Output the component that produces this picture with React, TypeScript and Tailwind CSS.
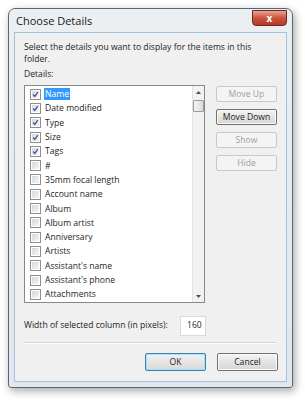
import React from "react";

const items: { label: string; checked: boolean; selected?: boolean }[] = [
  { label: "Name", checked: true, selected: true },
  { label: "Date modified", checked: true },
  { label: "Type", checked: true },
  { label: "Size", checked: true },
  { label: "Tags", checked: true },
  { label: "#", checked: false },
  { label: "35mm focal length", checked: false },
  { label: "Account name", checked: false },
  { label: "Album", checked: false },
  { label: "Album artist", checked: false },
  { label: "Anniversary", checked: false },
  { label: "Artists", checked: false },
  { label: "Assistant's name", checked: false },
  { label: "Assistant's phone", checked: false },
  { label: "Attachments", checked: false },
  { label: "", checked: false },
];

function CheckBox({ checked }: { checked: boolean }) {
  return (
    <div className="w-[11px] h-[11px] border border-[#8e8f8f] bg-white p-[1px] shrink-0">
      <div className="w-full h-full bg-gradient-to-br from-[#d6d8da] to-[#f6f6f6] flex items-center justify-center">
        {checked && (
          <svg width="9" height="9" viewBox="0 0 9 9">
            <path d="M1.5 4.5 L3.6 7 L7.5 1.5" fill="none" stroke="#3d5792" strokeWidth="1.6" />
          </svg>
        )}
      </div>
    </div>
  );
}

function Btn({ label, disabled }: { label: string; disabled?: boolean }) {
  const base =
    "w-[61px] h-[16px] rounded-[2px] flex items-center justify-center text-[8.6px] leading-none";
  if (disabled)
    return (
      <div className={`${base} border border-[#c9c9c9] bg-[#f4f4f4] text-[#a0a0a0]`}>{label}</div>
    );
  return (
    <div className={`${base} border border-[#707070] bg-gradient-to-b from-[#f3f3f3] to-[#d6d6d6] text-[#1e1e1e] shadow-[inset_0_0_0_1px_#fcfcfc]`}>
      {label}
    </div>
  );
}

export default function App() {
  return (
    <div
      className="w-[305px] h-[400px] bg-white pt-[8px] pl-[8px]"
      style={{ fontFamily: '"Open Sans", "Noto Sans", sans-serif' }}
    >
      <div className="w-[285px] h-[380px] rounded-t-[7px] rounded-b-[3px] border border-[#5a6670] bg-gradient-to-b from-[#eceff2] to-[#e1e7ec] shadow-[2px_3px_8px_rgba(0,0,0,0.35)] flex flex-col">
        <div className="h-[23px] shrink-0 flex items-center justify-between pl-[7px] pr-[5px]">
          <span className="text-[11px] text-[#1a1a1a] mt-[1px]">Choose Details</span>
          <div className="w-[35px] h-[16px] -mt-[6px] rounded-b-[4px] border border-[#6b2a22] bg-gradient-to-b from-[#e8a493] via-[#c9533d] to-[#b8382a] flex items-center justify-center">
            <span className="text-white text-[10px] font-bold leading-none">x</span>
          </div>
        </div>
        <div className="flex-1 mx-[5px] mb-[5px] border border-[#9fc3dc] bg-[#f0f0f0] pl-[9px] pr-[9px] pt-[8px] flex flex-col text-[8.6px] text-[#1e1e1e]">
          <div className="leading-[12px]">
            Select the details you want to display for the items in this
            <br />
            folder.
          </div>
          <div className="leading-[12px] mt-[3px]">Details:</div>
          <div className="flex mt-[5px] gap-[11px]">
            <div className="w-[181px] h-[218px] border border-[#828790] bg-white flex overflow-hidden">
              <div className="flex-1 pt-[1px] pl-[5px] overflow-hidden">
                {items.map((it, i) => (
                  <div key={i} className="h-[14.3px] flex items-center gap-[3px]">
                    <CheckBox checked={it.checked} />
                    {it.label && (
                      <span
                        className={
                          it.selected
                            ? "bg-[#3399ff] text-white px-[1px] leading-[12px]"
                            : "px-[1px] leading-[12px]"
                        }
                      >
                        {it.label}
                      </span>
                    )}
                  </div>
                ))}
              </div>
              <div className="w-[12px] border-l border-[#e2e2e2] bg-[#f2f2f2] flex flex-col items-center">
                <div className="h-[12px] flex items-center justify-center">
                  <svg width="5" height="3" viewBox="0 0 5 3">
                    <path d="M0 3 L2.5 0 L5 3 Z" fill="#4d4d4d" />
                  </svg>
                </div>
                <div className="w-[11px] h-[12px] mt-[2px] border border-[#9a9a9a] rounded-[1px] bg-gradient-to-r from-[#f3f3f3] to-[#dcdcdc]" />
                <div className="flex-1" />
                <div className="h-[12px] flex items-center justify-center">
                  <svg width="5" height="3" viewBox="0 0 5 3">
                    <path d="M0 0 L2.5 3 L5 0 Z" fill="#4d4d4d" />
                  </svg>
                </div>
              </div>
            </div>
            <div className="flex flex-col gap-[7px] pt-[1px]">
              <Btn label="Move Up" disabled />
              <Btn label="Move Down" />
              <Btn label="Show" disabled />
              <Btn label="Hide" disabled />
            </div>
          </div>
          <div className="flex items-center mt-[12px] h-[21px]">
            <span className="w-[156px]">Width of selected column (in pixels):</span>
            <div className="w-[26px] h-[20px] bg-white border border-[#dadada] flex items-center pl-[6px]">
              160
            </div>
          </div>
          <div className="mt-[6px] mr-[1px] border-t border-[#d2d6da] border-b border-b-white" />
          <div className="flex justify-end gap-[11px] mt-[9px] mr-[-1px]">
            <div className="w-[61px] h-[18px] rounded-[2px] border border-[#3c7fb1] bg-gradient-to-b from-[#f2f2f2] to-[#d8d8d8] shadow-[inset_0_0_0_1px_#a6e3f8] flex items-center justify-center">
              OK
            </div>
            <div className="w-[61px] h-[18px] rounded-[2px] border border-[#707070] bg-gradient-to-b from-[#f3f3f3] to-[#d6d6d6] shadow-[inset_0_0_0_1px_#fcfcfc] flex items-center justify-center">
              Cancel
            </div>
          </div>
        </div>
      </div>
    </div>
  );
}
